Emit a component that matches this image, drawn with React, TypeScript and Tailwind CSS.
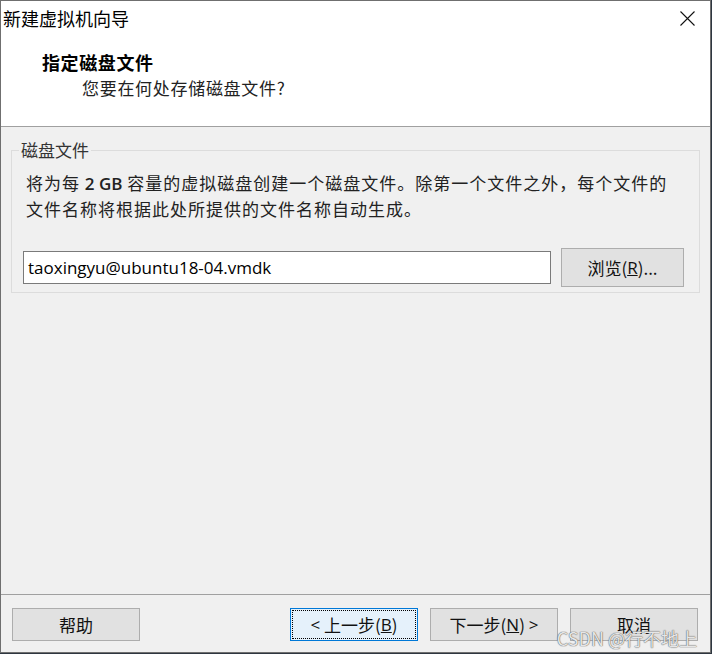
import React from "react";

const cjk = "font-['Noto_Sans_CJK_SC','Noto_Sans',sans-serif]";
const latin = "font-['Open_Sans','Noto_Sans_CJK_SC',sans-serif]";

function Btn({
  children,
  focused = false,
  className = "",
}: {
  children: React.ReactNode;
  focused?: boolean;
  className?: string;
}) {
  return (
    <button
      className={
        "relative flex items-center justify-center border text-[17px] leading-none text-[#111] " +
        (focused ? "border-[#0078d7] bg-[#e5f1fb] " : "border-[#adadad] bg-[#e1e1e1] ") +
        cjk +
        " " +
        className
      }
    >
      {focused && (
        <span className="pointer-events-none absolute inset-[1px] border border-dotted border-black" />
      )}
      {children}
    </button>
  );
}

export default function App() {
  return (
    <div className="h-[654px] w-[712px] overflow-hidden bg-[#2e3640]">
      <div className="relative flex h-[653px] w-[711px] flex-col border border-[#6f6f6f] bg-[#f0f0f0]">
        {/* header */}
        <div className="h-[126px] shrink-0 border-b border-[#a0a0a0] bg-white">
          <div className="flex items-start justify-between pl-[2px] pr-[15px] pt-[5px]">
            <span className={"text-[18px] leading-[24px] text-black " + cjk}>新建虚拟机向导</span>
            <svg width="15" height="15" viewBox="0 0 15 15" className="mt-[5px]">
              <path d="M0.5 0.5 L14.5 14.5 M14.5 0.5 L0.5 14.5" stroke="#111" strokeWidth="1.1" fill="none" />
            </svg>
          </div>
          <div className={"mt-[20px] pl-[41px] text-[18px] font-bold leading-[24px] tracking-[0.6px] text-black " + cjk}>
            指定磁盘文件
          </div>
          <div className={"mt-[2px] pl-[81px] text-[17px] leading-[24px] tracking-[0.7px] text-[#222] " + cjk}>
            您要在何处存储磁盘文件?
          </div>
        </div>

        {/* body */}
        <div className="flex flex-1 flex-col">
          <fieldset className="mx-[10px] mt-[11px] border border-[#dcdcdc] px-[11px] pb-[5px]">
            <legend className={"-ml-[4px] px-[2px] text-[17px] leading-[24px] text-[#333] " + cjk}>
              磁盘文件
            </legend>
            <p className={"mt-[8px] pl-[3px] text-[17px] leading-[25px] tracking-[1px] text-[#222] " + cjk}>
              将为每 <span className={"font-semibold tracking-normal " + latin}>2 GB</span>{" "}
              容量的虚拟磁盘创建一个磁盘文件。除第一个文件之外，每个文件的
              <br />
              文件名称将根据此处所提供的文件名称自动生成。
            </p>
            <div className="mt-[27px] flex items-center gap-[10px]">
              <div className="flex h-[33px] w-[528px] items-center border border-[#7a7a7a] bg-white pl-[4px]">
                <span className={"text-[17px] text-black " + latin}>taoxingyu@ubuntu18-04.vmdk</span>
              </div>
              <Btn className="h-[39px] w-[123px]">
                浏览(<span className={"underline " + latin}>R</span>)...
              </Btn>
            </div>
          </fieldset>

          <div className="flex-1" />

          <div className="h-px bg-[#a0a0a0]" />
          <div className="flex h-[57px] items-start pl-[11px] pr-[12px] pt-[13px]">
            <Btn className="h-[33px] w-[128px]">帮助</Btn>
            <div className="flex-1" />
            <div className="flex gap-[12px]">
              <Btn focused className="h-[33px] w-[128px]">
                <span className={latin}>&lt;</span>&nbsp;上一步(<span className={"underline " + latin}>B</span>)
              </Btn>
              <Btn className="h-[33px] w-[128px]">
                下一步(<span className={"underline " + latin}>N</span>)&nbsp;<span className={latin}>&gt;</span>
              </Btn>
              <Btn className="h-[33px] w-[128px]">取消</Btn>
            </div>
          </div>
        </div>

        <span
          className={
            "pointer-events-none absolute bottom-[3px] right-[13px] text-[18px] leading-[22px] text-white/85 [text-shadow:0_0_1px_#555,0_0_1px_#555] " +
            cjk
          }
        >
          CSDN @行不地上
        </span>
      </div>
    </div>
  );
}
